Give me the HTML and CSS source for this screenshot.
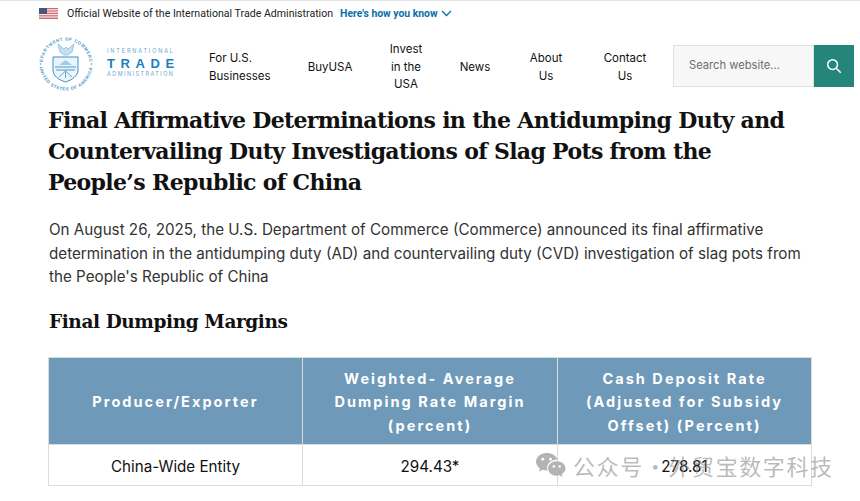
FILE: index.html
```html
<!DOCTYPE html>
<html lang="en">
<head>
<meta charset="utf-8">
<title>Final Affirmative Determinations</title>
<link rel="stylesheet" href="styles.css">
</head>
<body>
<div class="gov-bar">
  <svg class="flag" viewBox="0 0 19 11" width="19" height="11">
    <rect width="19" height="11" fill="#f4e9ea"/>
    <g fill="#cf6a72"><rect y="0" width="19" height="1.2"/><rect y="2.4" width="19" height="1.2"/><rect y="4.8" width="19" height="1.2"/><rect y="7.2" width="19" height="1.2"/><rect y="9.6" width="19" height="1.4"/></g>
    <rect width="8" height="6" fill="#4a5580"/>
  </svg>
  <span class="gov-text">Official Website of the International Trade Administration</span>
  <a class="gov-link">Here's how you know</a>
  <svg class="chev" viewBox="0 0 11 7" width="11" height="7"><path d="M1 1l4.500 4.500L10 1" fill="none" stroke="#0b6fa8" stroke-width="1.300"/></svg>
</div>
<header class="site-header">
  <div class="logo">
    <svg class="seal" viewBox="0 0 56 58" width="56" height="58">
      <defs>
        <path id="arcTop" d="M4.500 30A23.500 23.500 0 0 1 51.500 30"/>
        <path id="arcBot" d="M1.500 30A26.500 26.500 0 0 0 54.500 30"/>
      </defs>
      <text class="seal-text"><textPath href="#arcTop" startOffset="50%" text-anchor="middle">DEPARTMENT OF COMMERCE</textPath></text>
      <text class="seal-text"><textPath href="#arcBot" startOffset="50%" text-anchor="middle">UNITED STATES OF AMERICA</textPath></text>
      <circle cx="2.500" cy="30" r=".8" fill="#4a97cb"/>
      <circle cx="53.500" cy="30" r=".8" fill="#4a97cb"/>
      <path d="M20 10l6 5 2-2 2 2 6-5-2 8-4 3h-4l-4-3z" fill="#c4dff0" stroke="#7db4da" stroke-width=".7"/>
      <path d="M15 23h25v13c0 6-6 10-12.500 12C21 46 15 42 15 36z" fill="#eaf4fb" stroke="#3f8fc6" stroke-width="1"/>
      <path d="M21 31l6.500-5 6.500 5z" fill="#9fcbe8"/>
      <path d="M17 33h21M18 36h19" stroke="#4a97cb" stroke-width="1.200" fill="none"/>
      <path d="M27.500 36v8M21 43l6.500-6 6.500 6" stroke="#6aa9d4" stroke-width="1" fill="none"/>
    </svg>
    <div class="wordmark">
      <span class="wm-small">INTERNATIONAL</span>
      <span class="wm-big">TRADE</span>
      <span class="wm-small wm-tight">ADMINISTRATION</span>
    </div>
  </div>
  <nav class="nav">
    <a class="nav-item nav-left nav-w1">For U.S. Businesses</a>
    <a class="nav-item nav-w2">BuyUSA</a>
    <a class="nav-item nav-w3">Invest in the USA</a>
    <a class="nav-item nav-w4">News</a>
    <a class="nav-item nav-w5">About Us</a>
    <a class="nav-item nav-w6">Contact Us</a>
  </nav>
  <form class="search">
    <div class="search-input">Search website...</div>
    <div class="search-btn">
      <svg viewBox="0 0 16 16" width="16" height="16"><circle cx="6.600" cy="6.600" r="4.900" fill="none" stroke="#fff" stroke-width="1.500"/><path d="M10.200 10.200l4.600 4.600" stroke="#fff" stroke-width="1.600"/></svg>
    </div>
  </form>
</header>
<main class="content">
  <h1 class="title">Final Affirmative Determinations in the Antidumping Duty and Countervailing Duty Investigations of Slag Pots from the People’s Republic of China</h1>
  <p class="lead">On August 26, 2025, the U.S. Department of Commerce (Commerce) announced its final affirmative determination in the antidumping duty (AD) and countervailing duty (CVD) investigation of slag pots from the People's Republic of China</p>
  <h2 class="subtitle">Final Dumping Margins</h2>
  <table class="margins">
    <thead>
      <tr>
        <th class="c1">Producer/Exporter</th>
        <th class="c2">Weighted- Average Dumping Rate Margin (percent)</th>
        <th class="c3">Cash Deposit Rate (Adjusted for Subsidy Offset) (Percent)</th>
      </tr>
    </thead>
    <tbody>
      <tr>
        <td>China-Wide Entity</td>
        <td>294.43*</td>
        <td>278.81</td>
      </tr>
    </tbody>
  </table>
</main>
<div class="watermark">
  <svg class="wechat" viewBox="0 0 32 28" width="31" height="27">
    <path d="M12 1C5.900 1 1 5 1 10c0 2.900 1.600 5.400 4.100 7.100L4 20.500l3.900-2c1.300.4 2.700.6 4.100.6h.9c-.3-.9-.4-1.700-.4-2.600 0-4.900 4.600-8.700 10.300-8.700h.8C21.600 3.800 17.200 1 12 1z" fill="#b3b3b3"/>
    <path d="M22.500 9.500c-5 0-9 3.300-9 7.500s4 7.500 9 7.500c1 0 2-.1 2.900-.4l3.100 1.700-.8-2.900c2.300-1.400 3.800-3.500 3.800-5.900 0-4.200-4-7.500-9-7.500z" fill="#b3b3b3"/>
    <g fill="#fff"><circle cx="8" cy="7.500" r="1.500"/><circle cx="16" cy="7.500" r="1.500"/><circle cx="19.500" cy="15" r="1.300"/><circle cx="25.500" cy="15" r="1.300"/></g>
  </svg>
  <span class="wm-text">公众号 · 外贸宝数字科技</span>
</div>
</body>
</html>
```
FILE: styles.css
```css
* { box-sizing: border-box; }
html, body { margin: 0; padding: 0; height: 501px; overflow: hidden; background: #fff; }
body { position: relative; font-family: Inter, "Liberation Sans", sans-serif; color: #1b1b1b; border-top: 1px solid #e3e3e3; }
.gov-bar { display: flex; align-items: center; height: 24px; padding-left: 39px; }
.flag { margin-right: 9px; }
.gov-text { font-family: Roboto, sans-serif; font-size: 10.6px; color: #222; margin-right: 7px; }
.gov-link { font-family: Roboto, sans-serif; font-weight: 700; font-size: 10.4px; color: #0b6fa8; margin-right: 3px; }
.site-header { display: flex; align-items: center; height: 80px; padding-left: 38px; }
.logo { display: flex; align-items: center; width: 171px; flex: none; margin-top: -4px; }
.seal { flex: none; overflow: visible; }
.seal-text { font-size: 4.4px; font-family: "Liberation Sans", sans-serif; fill: #4a97cb; letter-spacing: .55px; font-weight: 700; }
.wordmark { display: flex; flex-direction: column; margin-left: 13px; color: #1a7fc0; line-height: 1; }
.wm-small { font-size: 5.5px; letter-spacing: 1.85px; color: #6aa9d4; white-space: nowrap; }
.wm-tight { letter-spacing: 1.45px; }
.wm-big { font-size: 13px; font-weight: 700; letter-spacing: 5.6px; margin: 2px 0; font-family: "Liberation Sans", sans-serif; }
.nav { display: flex; align-items: center; flex: none; width: 464px; margin-top: 5px; font-size: 11.5px; line-height: 17.5px; color: #111; }
.nav-item { display: block; text-align: center; flex: none; }
.nav-left { text-align: left; }
.nav-w1 { width: 81px; }
.nav-w2 { width: 60px; margin-left: 10px; }
.nav-w3 { width: 40px; margin-left: 26px; }
.nav-w4 { width: 40px; margin-left: 29px; }
.nav-w5 { width: 40px; margin-left: 31px; }
.nav-w6 { width: 50px; margin-left: 34px; }
.search { display: flex; height: 42px; width: 181px; flex: none; margin-top: 1px; }
.search-input { flex: 1; background: #f7f7f7; border: 1px solid #e1e1e1; padding-left: 15px; font-size: 11.2px; line-height: 39px; color: #6e6e6e; }
.search-btn { width: 40px; background: #24857a; display: flex; align-items: center; justify-content: center; }
.content { padding: 0 49px; }
.title { margin: 0 0 0 -1px; font-family: "DejaVu Serif", serif; font-weight: 700; font-size: 22px; letter-spacing: -.67px; line-height: 31px; color: #111; }
.lead { margin: 20px 0 0; font-size: 15.2px; line-height: 23.5px; color: #333; }
.subtitle { margin: 18px 0 0; font-family: "DejaVu Serif", serif; font-weight: 700; font-size: 18.5px; letter-spacing: -.4px; line-height: 30px; color: #111; }
.margins { border-collapse: separate; border-spacing: 0; border: 1px solid #dcdcdc; border-right: 0; border-bottom: 0; table-layout: fixed; width: 764px; margin: 20px 0 0 -1px; }
.margins th, .margins td { border-right: 1px solid #dcdcdc; border-bottom: 1px solid #dcdcdc; text-align: center; }
.margins th { background: #6f99b9; color: #fff; font-size: 14.5px; font-weight: 700; letter-spacing: 2.05px; line-height: 23.5px; height: 87px; padding: 3px 14px 0; }
.margins td { font-size: 15.2px; height: 41px; padding: 3px 0 0; color: #111; }
.c1 { width: 254px; }
.c2 { width: 255px; }
.c3 { width: 254px; }
.watermark { position: absolute; left: 535px; top: 449px; display: flex; align-items: center; gap: 7px; color: rgba(140,140,140,.6); pointer-events: none; }
.wechat { flex: none; }
.wm-text { font-family: "Noto Sans CJK SC", sans-serif; font-size: 22px; letter-spacing: 1.6px; word-spacing: -6px; line-height: 30px; white-space: nowrap; }
```
